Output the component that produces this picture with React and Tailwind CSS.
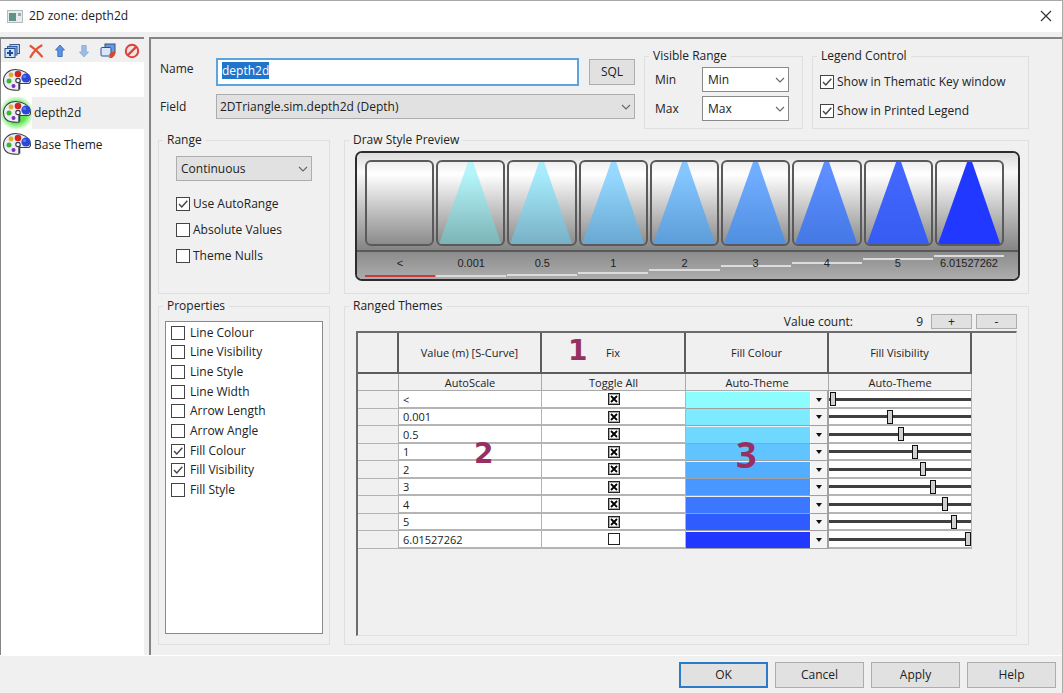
import { useEffect, useRef, useState } from "react";

const stops = [
  { value: "<", fill: "bg-[#8cfcff]", visibility: 1, fixed: true, line: "top-[23px] bg-[#c83c3c]" },
  { value: "0.001", fill: "bg-[#7eeaff]", visibility: 43, fixed: true, line: "top-[23px] bg-[#dcdcdc]", from: "#b4f4fa", to: "#7cb4b6" },
  { value: "0.5", fill: "bg-[#6fd8ff]", visibility: 51, fixed: true, line: "top-[22px] bg-[#dcdcdc]", from: "#a6ecfc", to: "#78b0c6" },
  { value: "1", fill: "bg-[#61c4ff]", visibility: 61, fixed: true, line: "top-[20px] bg-[#dcdcdc]", from: "#96d8ff", to: "#68a8d2" },
  { value: "2", fill: "bg-[#54aeff]", visibility: 67, fixed: true, line: "top-[17px] bg-[#dcdcdc]", from: "#84c6ff", to: "#5c9cd8" },
  { value: "3", fill: "bg-[#4896ff]", visibility: 74, fixed: true, line: "top-[13px] bg-[#dcdcdc]", from: "#70acff", to: "#508ee0" },
  { value: "4", fill: "bg-[#3b78ff]", visibility: 83, fixed: true, line: "top-[10px] bg-[#dcdcdc]", from: "#5c8eff", to: "#4478e4" },
  { value: "5", fill: "bg-[#2e5cff]", visibility: 90, fixed: true, line: "top-[6px] bg-[#dcdcdc]", from: "#4266ff", to: "#365cf0" },
  { value: "6.01527262", fill: "bg-[#2038ff]", visibility: 100, fixed: false, line: "top-[3px] bg-[#dcdcdc]", from: "#2038ff", to: "#2038ff" },
];

const properties = [
  ["Line Colour", false],
  ["Line Visibility", false],
  ["Line Style", false],
  ["Line Width", false],
  ["Arrow Length", false],
  ["Arrow Angle", false],
  ["Fill Colour", true],
  ["Fill Visibility", true],
  ["Fill Style", false],
];

function Checkbox({ label, checked, gap = "gap-[3px]" }) {
  return (
    <label className={`flex items-center ${gap}`}>
      <span className="grid">
        <input
          type="checkbox"
          defaultChecked={checked}
          className="peer col-start-1 row-start-1 size-[14px] appearance-none border border-[#444] bg-white"
        />
        <svg viewBox="0 0 14 14" className="pointer-events-none invisible col-start-1 row-start-1 size-[14px] peer-checked:visible">
          <path d="M3 7l2.8 3L11.3 3.8" fill="none" stroke="#444" strokeWidth="1.4" />
        </svg>
      </span>
      <span className="whitespace-nowrap">{label}</span>
    </label>
  );
}

function Select({ id, label, options, className, look }) {
  return (
    <span className={`grid items-center ${className}`}>
      <select
        id={id}
        aria-label={label}
        className={`col-start-1 row-start-1 h-full w-full appearance-none border outline-none ${look}`}
      >
        {options.map((o) => (
          <option key={o}>{o}</option>
        ))}
      </select>
      <svg viewBox="0 0 10 6" className="pointer-events-none col-start-1 row-start-1 mr-1 h-[6px] w-[10px] justify-self-end">
        <path d="M1 1l4 4 4-4" fill="none" stroke="#666" strokeWidth="1.1" />
      </svg>
    </span>
  );
}

function Group({ title, className = "", children }) {
  return (
    <fieldset className={`min-w-0 border border-[#dfdfdf] ${className}`}>
      <legend className="ml-1 px-1 leading-4">{title}</legend>
      {children}
    </fieldset>
  );
}

function Palette() {
  return (
    <svg viewBox="0 0 30 24" className="h-[24px] w-[30px]">
      <path
        d="M13.500 1.500C7 1.500 1.500 6 1.500 12.500c0 5 3 8.500 7.500 9.200 3.500.6 8 .8 8 .2v-6.400h9c2 0 2.800-1.500 2.400-3.500C27.500 5 20.500 1.500 13.500 1.500z"
        fill="#eceef4"
        stroke="#3c3e52"
        strokeWidth="1.100"
      />
      <path d="M17.500 13v8.500" stroke="#3c3e52" strokeWidth="1.600" />
      <circle cx="9" cy="7" r="2.400" fill="#e4aa28" />
      <circle cx="16" cy="6" r="3.300" fill="#cf2a20" />
      <circle cx="16" cy="12.500" r="2.200" fill="#fff" stroke="#3c3e52" strokeWidth="1.200" />
      <circle cx="7" cy="13" r="2.500" fill="#3cb434" />
      <circle cx="11.500" cy="18" r="2" fill="#7630b4" />
      <circle cx="24" cy="10" r="4.600" fill="#2a48d8" />
      <circle cx="22.500" cy="8.500" r="1.600" fill="#5c7cf0" />
    </svg>
  );
}

const tools = [
  {
    name: "Add theme",
    icon: (
      <>
        <rect x="6" y="1.500" width="9.500" height="9" fill="#bcd4f0" stroke="#3a5c98" />
        <rect x="3.500" y="3.500" width="9.500" height="8.500" fill="#8fb2e0" stroke="#3a5c98" />
        <rect x="1" y="5.500" width="10" height="9" fill="#cfe2f8" stroke="#234a8c" />
        <path d="M6 7v6M3 10h6" stroke="#1c4c9c" strokeWidth="2" />
      </>
    ),
  },
  {
    name: "Delete theme",
    icon: <path d="M2.500 3c4 2.500 8 6.500 11.500 10.500M13.500 2.500C9 5 5 9.500 2.500 14" fill="none" stroke="#e05438" strokeWidth="2.200" strokeLinecap="round" />,
  },
  {
    name: "Move up",
    icon: <path d="M8 2l4.500 5H10.200v6.500H5.800V7H3.500z" fill="#5c94e4" stroke="#2c62b8" strokeWidth=".8" />,
  },
  {
    name: "Move down",
    icon: <path d="M8 14l4.500-5H10.200V2.500H5.800V9H3.500z" fill="#9cbce6" stroke="#86a8d6" strokeWidth=".8" />,
  },
  {
    name: "Copy theme",
    icon: (
      <>
        <rect x="5" y="1" width="10" height="9" fill="#6c98d4" stroke="#2f5294" />
        <rect x="1" y="4.500" width="10" height="8.500" rx="1" fill="#d8e6f8" stroke="#2f5294" />
        <path d="M15 7.500v4.500l-3 3H8.500l2-2-1.500-1.500 3-3 1.500 1.500z" fill="#d8482c" />
      </>
    ),
  },
  {
    name: "Clear themes",
    icon: (
      <>
        <circle cx="8" cy="8" r="6.200" fill="#f8e2e0" stroke="#d8443c" strokeWidth="2" />
        <path d="M4 12l8-8" stroke="#d8443c" strokeWidth="2.400" />
      </>
    ),
  },
];

function PreviewCell({ stop, index }) {
  return (
    <div className="h-[86px] overflow-hidden rounded-[6px] border-2 border-[#5a5a5a] bg-linear-to-b from-[#eee] via-white via-15% to-[#8c8c8c]">
      {stop.from && (
        <svg viewBox="0 0 65 82" preserveAspectRatio="none" className="h-full w-full">
          <defs>
            <linearGradient id={`stop-${index}`} x1="0" y1="0" x2="0" y2="1">
              <stop offset="0.15" stopColor={stop.from} />
              <stop offset="1" stopColor={stop.to} />
            </linearGradient>
          </defs>
          <path d="M30 0h5L63 82H1z" fill={`url(#stop-${index})`} />
        </svg>
      )}
    </div>
  );
}

function FixBox({ checked, label }) {
  return (
    <span className="mx-auto grid w-[12px]">
      <input
        type="checkbox"
        defaultChecked={checked}
        aria-label={label}
        className="peer col-start-1 row-start-1 size-[12px] appearance-none border border-[#222] bg-white"
      />
      <svg viewBox="0 0 12 12" className="pointer-events-none invisible col-start-1 row-start-1 size-[12px] peer-checked:visible">
        <rect x="1.500" y="1.500" width="9" height="9" fill="none" stroke="#aaa" />
        <path d="M3 3l6 6M9 3l-6 6" stroke="#000" strokeWidth="1.800" />
      </svg>
    </span>
  );
}

const headCell = "border-r-2 border-b-2 border-[#5c5c5c] p-0 font-normal";
const autoCell = "border-r border-b border-[#aaa] p-0";
const bodyCell = "border-r border-b-2 border-[#b4b4b4] bg-white p-0";
const pushButton = "border border-[#adadad] bg-[#e1e1e1]";

export default function App() {
  const nameRef = useRef(null);
  const [theme, setTheme] = useState("depth2d");

  useEffect(() => {
    nameRef.current.focus();
    nameRef.current.select();
  }, []);

  return (
    <div className="flex min-h-screen flex-col border-t border-r border-[#aaa] bg-[#f0f0f0] font-['Open_Sans','Noto_Sans',sans-serif] text-[12px] leading-4 text-[#222]">
      <header className="flex h-[31px] shrink-0 items-center gap-[6px] bg-white pr-[9px] pb-[1px] pl-[7px]">
        <svg viewBox="0 0 16 13" className="h-[13px] w-[16px]">
          <rect x=".5" y=".5" width="15" height="12" fill="#e8ecec" stroke="#b4baba" />
          <rect x="2" y="3" width="7" height="8" fill="#5c9488" />
          <rect x="11" y="3" width="3" height="3" fill="#9aa8b4" />
        </svg>
        <h1 className="flex-1">2D zone: depth2d</h1>
        <button aria-label="Close" className="p-[1px]">
          <svg viewBox="0 0 12 12" className="size-[12px]">
            <path d="M1 1l10 10M11 1L1 11" stroke="#333" strokeWidth="1.200" />
          </svg>
        </button>
      </header>

      <main className="mt-[5px] flex flex-1 gap-[5px] border-b border-white">
        <aside className="w-[144px] shrink-0 border-t-2 border-l border-[#858585] bg-white">
          <div className="flex h-[23px] items-center gap-[8px] bg-[#f0f0f0] pl-[3px]">
            {tools.map((t) => (
              <button key={t.name} aria-label={t.name}>
                <svg viewBox="0 0 16 16" className="size-[16px]">
                  {t.icon}
                </svg>
              </button>
            ))}
          </div>
          <ul className="pt-[3px]">
            {["speed2d", "depth2d", "Base Theme"].map((name) => (
              <li key={name}>
                <button onClick={() => setTheme(name)} className="flex h-[32px] w-full items-stretch text-left">
                  <span
                    className={`flex w-[31px] items-center pb-[2px] pl-[1px] ${
                      theme === name ? "bg-[radial-gradient(circle_at_center,#5ce84c_45%,#ffffff_78%)]" : ""
                    }`}
                  >
                    <Palette />
                  </span>
                  <span className={`flex flex-1 items-center pl-[2px] ${theme === name ? "bg-[#efefef]" : ""}`}>{name}</span>
                </button>
              </li>
            ))}
          </ul>
        </aside>

        <section className="flex min-w-0 flex-1 flex-col border-t-2 border-l-2 border-[#858585] pt-[9px] pr-[33px] pb-[10px] pl-[7px]">
          <div className="flex gap-[9px]">
            <div className="grid min-w-0 flex-1 grid-cols-[58px_1fr_46px] content-start gap-y-[8px] pt-[10px]">
              <label htmlFor="name" className="pt-[3px] pl-[2px]">
                Name
              </label>
              <input
                id="name"
                ref={nameRef}
                defaultValue="depth2d"
                className="mr-[10px] h-[28px] min-w-0 border-2 border-[#5ea4dc] bg-white px-[4px] pb-[4px] outline-none selection:bg-[#1f74cc] selection:text-white"
              />
              <button className={`my-[1px] ${pushButton}`}>SQL</button>
              <label htmlFor="field" className="pt-[5px] pl-[2px]">
                Field
              </label>
              <Select
                id="field"
                options={["2DTriangle.sim.depth2d (Depth)"]}
                className="col-span-2 h-[25px]"
                look="border-[#adadad] bg-[#e1e1e1] pl-[3px]"
              />
            </div>

            <Group title="Visible Range" className="h-[81px] w-[159px]">
              <div className="grid grid-cols-[47px_87px] items-center gap-y-[4px] pt-[3px] pl-[10px]">
                <label htmlFor="vmin">Min</label>
                <Select id="vmin" options={["Min"]} className="h-[25px]" look="border-[#8a8a8a] bg-white pl-[5px]" />
                <label htmlFor="vmax">Max</label>
                <Select id="vmax" options={["Max"]} className="h-[25px]" look="border-[#8a8a8a] bg-white pl-[5px]" />
              </div>
            </Group>

            <Group title="Legend Control" className="h-[81px] w-[217px]">
              <div className="flex flex-col gap-[13px] pt-[10px] pl-[7px]">
                <Checkbox label="Show in Thematic Key window" checked />
                <Checkbox label="Show in Printed Legend" checked />
              </div>
            </Group>
          </div>

          <div className="mt-[3px] grid flex-1 grid-cols-[172px_1fr] grid-rows-[162px_1fr] gap-x-[14px] gap-y-[4px]">
            <Group title="Range">
              <div className="pt-[8px] pl-[17px]">
                <Select
                  label="Range type"
                  options={["Continuous"]}
                  className="h-[25px] w-[136px]"
                  look="border-[#adadad] bg-[#e1e1e1] pl-[4px]"
                />
                <div className="mt-[15px] flex flex-col gap-[10px]">
                  <Checkbox label="Use AutoRange" checked />
                  <Checkbox label="Absolute Values" />
                  <Checkbox label="Theme Nulls" />
                </div>
              </div>
            </Group>

            <Group title="Draw Style Preview">
              <div className="mt-[3px] mr-[8px] ml-[10px] overflow-hidden rounded-[7px] border-2 border-[#2c2c2c] font-['Liberation_Sans',Arial,sans-serif] text-[11px]">
                <div className="grid h-[99px] grid-cols-9 gap-[2px] border-b-2 border-[#5a5a5a] bg-linear-to-b from-[#dcdcdc] via-[#fafafa] via-20% to-[#858585] pt-[7px] pr-[14px] pl-[8px]">
                  {stops.map((s, i) => (
                    <PreviewCell key={s.value} stop={s} index={i} />
                  ))}
                </div>
                <div className="grid h-[27px] grid-cols-9 gap-[1px] bg-linear-to-b from-[#8c8c8c] to-[#adadad] pr-[14px] pl-[8px]">
                  {stops.map((s) => (
                    <div key={s.value} className="relative pt-[3px] text-center">
                      <span className={`absolute left-0 h-[2px] w-full ${s.line}`} />
                      <span className="relative">{s.value}</span>
                    </div>
                  ))}
                </div>
              </div>
            </Group>

            <Group title="Properties" className="flex flex-col">
              <div className="mx-[6px] mt-[7px] mb-[9px] h-[313px] border border-[#8a8a8a] bg-white pt-[1px] pl-[5px]">
                <div className="grid h-[177px] grid-rows-9">
                  {properties.map(([label, on]) => (
                    <Checkbox key={label} label={label} checked={on} gap="gap-[5px]" />
                  ))}
                </div>
              </div>
            </Group>

            <Group title="Ranged Themes">
              <div className="flex h-[15px] items-center justify-end pr-[11px]">
                <span>Value count:</span>
                <output className="w-[70px] text-right">9</output>
                <button aria-label="Add value" className={`ml-[8px] h-[15px] w-[41px] leading-none ${pushButton}`}>
                  +
                </button>
                <button aria-label="Remove value" className={`ml-[4px] h-[15px] w-[41px] leading-none ${pushButton}`}>
                  -
                </button>
              </div>
              <div className="relative mt-[2px] mr-[11px] ml-[11px] h-[305px] border-t-2 border-r border-b border-l-2 border-t-[#6c6c6c] border-r-[#e2e2e2] border-b-[#e2e2e2] border-l-[#6c6c6c] text-[11px]">
                <table className="w-[614px] table-fixed border-separate border-spacing-0">
                  <colgroup>
                    <col className="w-[41px]" />
                    <col className="w-[143px]" />
                    <col className="w-[144px]" />
                    <col className="w-[143px]" />
                    <col className="w-[143px]" />
                  </colgroup>
                  <thead>
                    <tr className="h-[41px]">
                      <th className={headCell} aria-label="Row" />
                      <th className={headCell}>Value (m) [S-Curve]</th>
                      <th className={headCell}>Fix</th>
                      <th className={headCell}>Fill Colour</th>
                      <th className={headCell}>Fill Visibility</th>
                    </tr>
                  </thead>
                  <tbody>
                    <tr className="h-[17px]">
                      <td className={autoCell} />
                      {["AutoScale", "Toggle All", "Auto-Theme", "Auto-Theme"].map((t, i) => (
                        <td key={i} className={autoCell}>
                          <button className="block h-[16px] w-full leading-[18px]">{t}</button>
                        </td>
                      ))}
                    </tr>
                    {stops.map((s) => (
                      <tr key={s.value} className="odd:h-[17px] even:h-[18px]">
                        <td className="border-r border-b border-[#b4b4b4] p-0" />
                        <td className={`${bodyCell} pl-[4px] leading-[15px]`}>{s.value}</td>
                        <td className={bodyCell}>
                          <FixBox checked={s.fixed} label={`Fix ${s.value}`} />
                        </td>
                        <td className="border-r-2 border-b border-[#a0a0a0] p-0">
                          <div className="flex h-[16px]">
                            <span className={`flex-1 ${s.fill}`} />
                            <button aria-label={`Fill colour for ${s.value}`} className="grid w-[17px] place-items-center border-l border-white bg-[#f4f4f4]">
                              <svg viewBox="0 0 6 4" className="h-[4px] w-[6px]">
                                <path d="M0 0h6L3 4z" fill="#111" />
                              </svg>
                            </button>
                          </div>
                        </td>
                        <td className={bodyCell}>
                          <input
                            type="range"
                            aria-label={`Fill visibility for ${s.value}`}
                            defaultValue={s.visibility}
                            className="block h-[15px] w-full appearance-none bg-transparent bg-[linear-gradient(#404040,#404040)] bg-[length:100%_3px] bg-center bg-no-repeat [&::-webkit-slider-thumb]:h-[14px] [&::-webkit-slider-thumb]:w-[6px] [&::-webkit-slider-thumb]:appearance-none [&::-webkit-slider-thumb]:border [&::-webkit-slider-thumb]:border-[#111] [&::-webkit-slider-thumb]:bg-[#d0d0d0]"
                          />
                        </td>
                      </tr>
                    ))}
                  </tbody>
                </table>
                <span className="pointer-events-none absolute top-[2px] left-[210px] font-['DejaVu_Sans'] text-[28px] leading-8 font-bold text-[#963060]">
                  1
                </span>
                <span className="pointer-events-none absolute top-[105px] left-[116px] font-['DejaVu_Sans'] text-[28px] leading-8 font-bold text-[#963060]">
                  2
                </span>
                <span className="pointer-events-none absolute top-[106px] left-[378px] font-['Open_Sans'] text-[36px] leading-8 font-bold text-[#963060]">
                  3
                </span>
              </div>
            </Group>
          </div>
        </section>
      </main>

      <footer className="flex shrink-0 justify-end gap-[7px] pt-[6px] pr-[6px] pb-[5px]">
        <button className="h-[26px] w-[89px] border-2 border-[#2a7cc8] bg-[#e1e1e1]">OK</button>
        {["Cancel", "Apply", "Help"].map((t) => (
          <button key={t} className={`h-[26px] w-[89px] ${pushButton}`}>
            {t}
          </button>
        ))}
      </footer>
    </div>
  );
}
